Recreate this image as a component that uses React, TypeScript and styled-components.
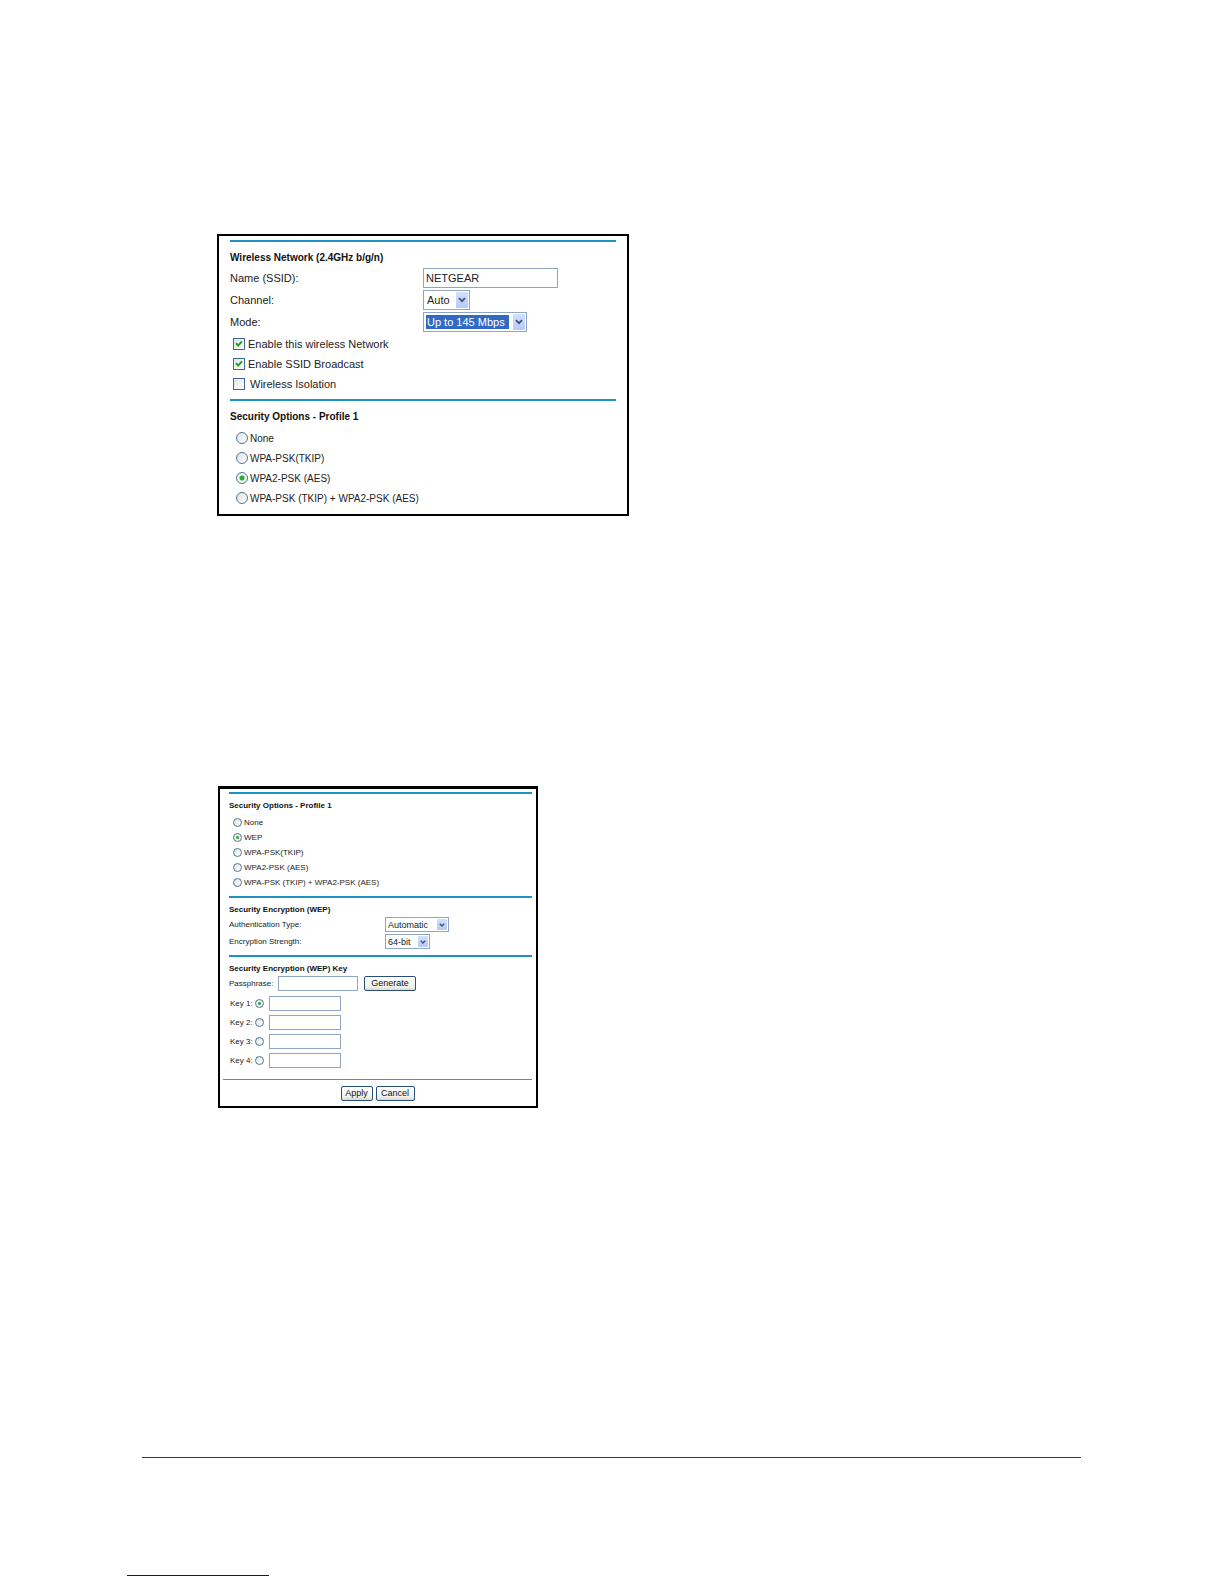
import React, { useState } from "react";
import styled, { createGlobalStyle } from "styled-components";

const GlobalStyle = createGlobalStyle`
  *, *::before, *::after { box-sizing: border-box; }
  body {
    margin: 0;
    background: #fff;
    color: #222;
    font-family: "Liberation Sans", Arial, sans-serif;
  }
`;

type Size = { $small?: boolean };

const Page = styled.main`
  display: flex;
  flex-direction: column;
  align-items: flex-start;
  min-height: 100vh;
  padding: 234px 143px 8px 127px;
`;

const Panel = styled.form<Size>`
  width: ${(p) => (p.$small ? 320 : 412)}px;
  max-width: 100%;
  margin-left: ${(p) => (p.$small ? 91 : 90)}px;
  margin-top: ${(p) => (p.$small ? 270 : 0)}px;
  padding: ${(p) => (p.$small ? "3px 4px 5px 3px" : "4px 11px 6px")};
  border: 2px solid #000;
  border-top-width: ${(p) => (p.$small ? 3 : 2)}px;
  font-size: ${(p) => (p.$small ? 8 : 11)}px;
`;

const Section = styled.section<Size>`
  margin-left: ${(p) => (p.$small ? 6 : 0)}px;
  padding-bottom: ${(p) => (p.$small ? 5 : 0)}px;
  border-top: 2px solid #1c93c4;
`;

const Heading = styled.h2<Size>`
  margin: 0;
  padding-top: ${(p) => (p.$small ? 6 : 8)}px;
  font-size: ${(p) => (p.$small ? 8 : 10)}px;
  line-height: ${(p) => (p.$small ? 12 : 16)}px;
  color: #111;
`;

const FieldGrid = styled.div<Size>`
  display: grid;
  grid-template-columns: ${(p) => (p.$small ? 156 : 193)}px 1fr;
  grid-auto-rows: ${(p) => (p.$small ? 17 : 22)}px;
  align-items: center;
  justify-items: start;
  margin-top: ${(p) => (p.$small ? 0 : 1)}px;
`;

const TextInput = styled.input<{ $width: number } & Size>`
  appearance: none;
  width: ${(p) => p.$width}px;
  height: ${(p) => (p.$small ? 15 : 20)}px;
  margin: 0;
  padding: 0 2px;
  border: 1px solid #8fa5c4;
  border-radius: 0;
  background: #fff;
  color: #222;
  font: inherit;
`;

const SelectBox = styled.span<{ $width: number } & Size>`
  position: relative;
  display: flex;
  width: ${(p) => p.$width}px;
  height: ${(p) => (p.$small ? 15 : 20)}px;
`;

const SelectControl = styled.select<{ $selected?: boolean } & Size>`
  appearance: none;
  width: 100%;
  margin: 0;
  padding: 0 ${(p) => (p.$small ? 12 : 16)}px 0 ${(p) => (p.$small ? 2 : 3)}px;
  border: 1px solid #8fa5c4;
  border-radius: 0;
  background: ${(p) =>
    p.$selected
      ? "linear-gradient(#316ac5, #316ac5) 2px 2px / calc(100% - 19px) calc(100% - 4px) no-repeat #fff"
      : "#fff"};
  color: ${(p) => (p.$selected ? "#fff" : "#222")};
  font: inherit;
  font-size: ${(p) => (p.$small ? 9 : 11)}px;
`;

const SelectArrow = styled.span<Size>`
  position: absolute;
  top: 2px;
  right: 2px;
  bottom: 2px;
  display: flex;
  align-items: center;
  justify-content: center;
  width: ${(p) => (p.$small ? 10 : 12)}px;
  border-radius: 1px;
  background: linear-gradient(#d3e0fd, #b4c9f6);
  pointer-events: none;
`;

const CheckList = styled.div`
  padding: 1px 0 5px 3px;
`;

const RadioList = styled.div<Size>`
  padding: ${(p) => (p.$small ? "3px 0 1px 4px" : "3px 0 0 6px")};
`;

const Choice = styled.label<{ $gap: number; $text: number; $row: number }>`
  display: flex;
  align-items: center;
  gap: ${(p) => p.$gap}px;
  height: ${(p) => p.$row}px;
  font-size: ${(p) => p.$text}px;
  white-space: nowrap;
`;

const CheckBox = styled.span`
  position: relative;
  display: flex;
  width: 12px;
  height: 12px;

  svg {
    position: absolute;
    inset: 0;
    pointer-events: none;
  }
  input:not(:checked) + svg { display: none; }
`;

const CheckInput = styled.input`
  appearance: none;
  width: 12px;
  height: 12px;
  margin: 0;
  border: 1px solid #3c6a93;
  background: linear-gradient(135deg, #e2e4e2, #fff);
`;

const Radio = styled.input<Size>`
  appearance: none;
  flex: none;
  width: ${(p) => (p.$small ? 9 : 12)}px;
  height: ${(p) => (p.$small ? 9 : 12)}px;
  margin: 0;
  border: 1px solid #4f7596;
  border-radius: 50%;
  background: linear-gradient(135deg, #dfe3e3, #fff);

  &:checked {
    background: radial-gradient(circle, #2eaa35 ${(p) => (p.$small ? 1 : 2)}px, #edf5ed ${(p) => (p.$small ? 2 : 3)}px);
  }
`;

const PassphraseRow = styled.div`
  display: flex;
  align-items: center;
  height: 17px;
`;

const PassphraseLabel = styled.label`
  width: 49px;
`;

const Button = styled.button<{ $width: number; $after?: number }>`
  width: ${(p) => p.$width}px;
  height: 15px;
  margin: 0 0 0 ${(p) => p.$after ?? 0}px;
  padding: 0;
  border: 1px solid #285078;
  border-radius: 2px;
  background: linear-gradient(#fff, #f2f1eb 75%, #d9d6cb);
  color: #111;
  font: inherit;
  font-size: 9px;
  line-height: 13px;
`;

const KeyList = styled.div`
  padding: 2px 0 4px 1px;
`;

const KeyRow = styled.div`
  display: grid;
  grid-template-columns: 25px 14px 72px;
  align-items: center;
  height: 19px;
`;

const Actions = styled.div`
  display: flex;
  justify-content: center;
  gap: 3px;
  padding-top: 6px;
  border-top: 1px solid #329fba;
`;

const FooterRule = styled.hr`
  align-self: stretch;
  height: 1px;
  margin: 349px 0 0 15px;
  border: 0;
  background: #352d63;
`;

const EndRule = styled.hr`
  width: 142px;
  height: 1px;
  margin: 117px 0 0;
  border: 0;
  background: #190b84;
`;

function Dropdown({ id, value, width, small, selected }: {
  id: string; value: string; width: number; small?: boolean; selected?: boolean;
}) {
  const arrow = small ? 6 : 8;
  return (
    <SelectBox $width={width} $small={small}>
      <SelectControl id={id} $small={small} $selected={selected}>
        <option>{value}</option>
      </SelectControl>
      <SelectArrow $small={small}>
        <svg width={arrow} height={arrow} viewBox="0 0 8 8" aria-hidden="true">
          <path d="M1 2.2 4 5.2 7 2.2" fill="none" stroke="#40557d" strokeWidth="1.9" />
        </svg>
      </SelectArrow>
    </SelectBox>
  );
}

function CheckChoice({ text, checked, gap }: { text: string; checked?: boolean; gap: number }) {
  return (
    <Choice $gap={gap} $text={11} $row={20}>
      <CheckBox>
        <CheckInput type="checkbox" defaultChecked={checked} />
        <svg width="12" height="12" viewBox="0 0 12 12" aria-hidden="true">
          <path d="M3 5.2 5.1 7.6 9 3.4" fill="none" stroke="#21a121" strokeWidth="2" />
        </svg>
      </CheckBox>
      {text}
    </Choice>
  );
}

function SecurityChoices({ name, options, initial, small }: {
  name: string; options: string[]; initial: string; small?: boolean;
}) {
  const [value, setValue] = useState(initial);
  return (
    <RadioList $small={small} role="radiogroup" aria-label="Security Options">
      {options.map((option) => (
        <Choice key={option} $gap={2} $text={small ? 8 : 10} $row={small ? 15 : 20}>
          <Radio
            type="radio"
            name={name}
            $small={small}
            checked={value === option}
            onChange={() => setValue(option)}
          />
          {option}
        </Choice>
      ))}
    </RadioList>
  );
}

const WPA_OPTIONS = ["WPA-PSK(TKIP)", "WPA2-PSK (AES)", "WPA-PSK (TKIP) + WPA2-PSK (AES)"];

export default function App() {
  const [activeKey, setActiveKey] = useState(1);
  return (
    <>
      <GlobalStyle />
      <Page>
        <Panel onSubmit={(e) => e.preventDefault()}>
          <Section>
            <Heading>Wireless Network (2.4GHz b/g/n)</Heading>
            <FieldGrid>
              <label htmlFor="ssid">Name (SSID):</label>
              <TextInput id="ssid" type="text" defaultValue="NETGEAR" $width={135} />
              <label htmlFor="channel">Channel:</label>
              <Dropdown id="channel" value="Auto" width={47} />
              <label htmlFor="mode">Mode:</label>
              <Dropdown id="mode" value="Up to 145 Mbps" width={104} selected />
            </FieldGrid>
            <CheckList>
              <CheckChoice text="Enable this wireless Network" checked gap={3} />
              <CheckChoice text="Enable SSID Broadcast" checked gap={3} />
              <CheckChoice text="Wireless Isolation" gap={5} />
            </CheckList>
          </Section>
          <Section>
            <Heading>Security Options - Profile 1</Heading>
            <SecurityChoices name="security" options={["None", ...WPA_OPTIONS]} initial="WPA2-PSK (AES)" />
          </Section>
        </Panel>

        <Panel $small onSubmit={(e) => e.preventDefault()}>
          <Section $small>
            <Heading $small>Security Options - Profile 1</Heading>
            <SecurityChoices name="wep-security" options={["None", "WEP", ...WPA_OPTIONS]} initial="WEP" small />
          </Section>
          <Section $small>
            <Heading $small>Security Encryption (WEP)</Heading>
            <FieldGrid $small>
              <label htmlFor="auth">Authentication Type:</label>
              <Dropdown id="auth" value="Automatic" width={64} small />
              <label htmlFor="strength">Encryption Strength:</label>
              <Dropdown id="strength" value="64-bit" width={45} small />
            </FieldGrid>
          </Section>
          <Section $small>
            <Heading $small>Security Encryption (WEP) Key</Heading>
            <PassphraseRow>
              <PassphraseLabel htmlFor="passphrase">Passphrase:</PassphraseLabel>
              <TextInput id="passphrase" type="text" $width={80} $small />
              <Button type="button" $width={52} $after={6}>Generate</Button>
            </PassphraseRow>
            <KeyList>
              {[1, 2, 3, 4].map((n) => (
                <KeyRow key={n}>
                  <label htmlFor={`key-${n}`}>Key {n}:</label>
                  <Radio
                    id={`key-${n}`}
                    type="radio"
                    name="active-key"
                    $small
                    checked={activeKey === n}
                    onChange={() => setActiveKey(n)}
                  />
                  <TextInput type="text" aria-label={`Key ${n} value`} $width={72} $small />
                </KeyRow>
              ))}
            </KeyList>
          </Section>
          <Actions>
            <Button type="submit" $width={32}>Apply</Button>
            <Button type="reset" $width={39}>Cancel</Button>
          </Actions>
        </Panel>

        <FooterRule />
        <EndRule />
      </Page>
    </>
  );
}
